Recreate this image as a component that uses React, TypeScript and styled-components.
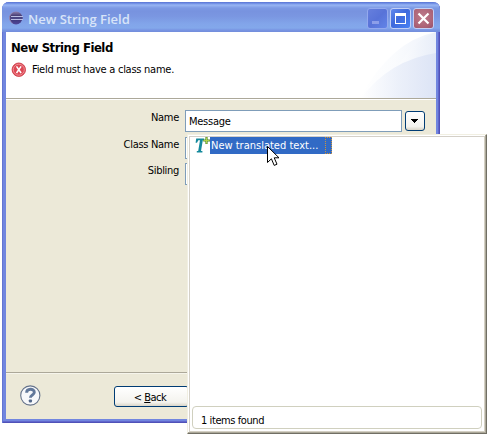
import React from 'react';
import styled, { createGlobalStyle } from 'styled-components';

const GlobalStyle = createGlobalStyle`
  * { box-sizing: border-box; }
  body { margin: 0; background: #fff; overflow: hidden; }
`;

const Desktop = styled.main`
  position: relative;
  width: 490px;
  height: 437px;
  padding: 2px;
  background: #fff;
  color: #000;
  font: 11px/14px 'DejaVu Sans Condensed', 'DejaVu Sans', sans-serif;
`;

const Text = styled.span<{ $spacing?: number }>`
  white-space: nowrap;
  letter-spacing: ${(p) => p.$spacing ?? -0.26}px;
`;

const Window = styled.section`
  display: flex;
  flex-direction: column;
  width: 438px;
  height: 421px;
  padding: 0 4px 4px;
  border-radius: 7px 7px 0 0;
  background: #7186df;
  box-shadow: inset 1px 0 #6375d2, inset -1px -1px #5052b8, inset -2px -2px #6167cc;
  overflow: hidden;
`;

const TitleBar = styled.header`
  display: flex;
  flex: 0 0 30px;
  align-items: center;
  margin: 0 -4px;
  padding: 2px 6px 0 7px;
  background: linear-gradient(#5873d4 0, #7b9aea 2px, #98b5f3 3px, #7c99e5 6px, #7893df 9px, #7a96e1 14px, #82a5ea 22px, #83a8eb 26px, #7895e3 28px, #728ddb 30px);
`;

const Title = styled.h1`
  flex: 1;
  margin: 0 0 0 3px;
  padding-top: 1px;
  color: #d8e4f8;
  font: 600 13px/18px 'Open Sans', 'Noto Sans', sans-serif;
  letter-spacing: 0;
`;

const WindowButton = styled.button<{ $kind: 'minimize' | 'maximize' | 'close' }>`
  width: 21px;
  height: 21px;
  margin-left: 2px;
  padding: 0;
  border: 1px solid ${(p) => (p.$kind === 'minimize' ? '#94a9ee' : '#c3cff5')};
  border-radius: 3px;
  background: ${(p) =>
    p.$kind === 'close'
      ? 'radial-gradient(circle at 45% 40%, #bd7a8b, #ad6477 65%, #96516b)'
      : p.$kind === 'maximize'
        ? 'linear-gradient(135deg, #6389ed, #3e69dc 45%, #4982f4)'
        : 'linear-gradient(135deg, #667fdd, #5873d8 50%, #6284e8)'};
  svg { display: block; }
`;

const Banner = styled.div`
  display: flex;
  flex: 0 0 68px;
  justify-content: space-between;
  background: #fff;
  border-bottom: 1px solid #fff;
  box-shadow: inset 0 -1px #aca899;
`;

const BannerCopy = styled.div`
  padding: 8px 0 0 5px;
`;

const Heading = styled.h2`
  margin: 0 0 7px;
  font-size: 13px;
  line-height: 15px;
  font-weight: bold;
  letter-spacing: -0.48px;
  white-space: nowrap;
`;

const Message = styled.div`
  display: flex;
  align-items: center;
  gap: 6px;
  height: 15px;
`;

const Form = styled.form`
  display: grid;
  flex: 1;
  grid-template-columns: 173px 217px 20px;
  grid-template-rows: 22px 22px 22px;
  row-gap: 4.5px;
  column-gap: 3px;
  align-content: start;
  padding: 10px 0 0;
  background: #ece9d8;
`;

const Label = styled.label`
  padding-top: 1px;
  text-align: right;
  white-space: nowrap;
  letter-spacing: -0.3px;
`;

const Field = styled.div`
  height: 22px;
  margin: 0 -3px 0 3px;
  padding: 4px 3px;
  border: 1px solid #7f9db9;
  background: #fff;
`;

const DropButton = styled.button`
  display: grid;
  place-items: center;
  width: 20px;
  height: 20px;
  margin: 1px 0 0 3px;
  padding: 0;
  border: 1px solid #003c74;
  border-radius: 3px;
  background: linear-gradient(#fff, #f4f3ee 80%, #d9d5c8);
`;

const Footer = styled.footer`
  display: flex;
  flex: 0 0 47px;
  align-items: flex-start;
  padding: 13px 0 0 14px;
  background: #ece9d8;
  border-top: 1px solid #aca899;
  box-shadow: inset 0 1px #f6f5ec;
  svg { margin-top: -1px; }
`;

const BackButton = styled.button`
  width: 75px;
  height: 21px;
  margin-left: 72px;
  padding: 2px 3px 0 0;
  border: 1px solid #003c74;
  border-radius: 3px;
  color: #000;
  background: linear-gradient(#fff, #f4f3ee 80%, #d9d5c8);
  font: inherit;
  line-height: 14px;
`;

const Popup = styled.aside`
  position: absolute;
  left: 187px;
  top: 134px;
  display: flex;
  flex-direction: column;
  width: 300px;
  height: 300px;
  padding: 3px 3px 4px;
  background: #fff;
  border: 1px solid;
  border-color: #f1efe2 #716f64 #716f64 #f1efe2;
  box-shadow: inset -1px -1px #aca899, inset 1px 1px #fff, inset -2px -2px #d4d0c4, inset 2px 2px #d4d0c8;
`;

const Proposal = styled.div`
  display: flex;
  height: 17px;
  margin: -1px 0 0 3px;
`;

const Selected = styled.div`
  position: relative;
  width: 122px;
  height: 17px;
  padding: 2px 1px;
  color: #fff;
  background: #316ac5;
`;

const FocusEdge = styled.i`
  position: absolute;
  right: 0;
  top: 0;
  width: 7px;
  height: 17px;
  border: 1px dotted #ce953a;
`;

const Status = styled.div`
  width: 290px;
  height: 23px;
  margin: auto 0 0 1px;
  padding: 7px 8px 0;
  border: 1px solid #d0d0bf;
  border-radius: 4px;
`;

const Cursor = styled.svg`
  position: absolute;
  left: 267px;
  top: 146px;
`;

const EclipseIcon = () => (
  <svg width="16" height="14" viewBox="0 0 16 14">
    <defs>
      <linearGradient id="orb" x2="0" y2="1"><stop stopColor="#8f80ae" /><stop offset=".4" stopColor="#352e68" /><stop offset="1" stopColor="#51479a" /></linearGradient>
    </defs>
    <circle cx="7" cy="7" r="6.5" fill="url(#orb)" />
    <path d="M2 5.5h12M2 8.5h12" stroke="#b9bde2" />
    <path d="M1 7h13" stroke="#595896" />
    <path d="M3.5 1.8A6 6 0 0 0 3.5 12.2" fill="none" stroke="#a58daf" strokeWidth=".8" />
  </svg>
);

const ErrorIcon = () => (
  <svg width="15" height="15" viewBox="0 0 15 15">
    <circle cx="7.8" cy="7.7" r="6.7" fill="#dc4855" stroke="#cf3a46" strokeWidth=".9" />
    <circle cx="7.8" cy="7.7" r="5.5" fill="none" stroke="#f0969b" strokeWidth=".9" />
    <path d="m5.5 4.4 4.6 6.6m0-6.6-4.6 6.6" stroke="#fff" strokeWidth="1.5" />
  </svg>
);

const Swoosh = () => (
  <svg width="80" height="66" viewBox="0 0 80 66">
    <defs>
      <linearGradient id="veil"><stop stopColor="#fff" /><stop offset=".45" stopColor="#f8fafd" /><stop offset="1" stopColor="#e6ecf8" /></linearGradient>
      <linearGradient id="fold"><stop stopColor="#fff" /><stop offset=".5" stopColor="#e9eef9" /><stop offset="1" stopColor="#dae2f5" /></linearGradient>
    </defs>
    <path d="M4 66Q35 9 80 0V66Z" fill="url(#veil)" opacity=".7" />
    <path d="M27 66Q47 11 80 0V66Z" fill="url(#veil)" opacity=".8" />
    <path d="M5 66Q34 28 80 21V66Z" fill="url(#fold)" opacity=".85" />
  </svg>
);

const HelpIcon = () => (
  <svg width="22" height="22" viewBox="0 0 22 22">
    <circle cx="10.3" cy="10.5" r="9.6" fill="#f7f8fa" stroke="#65738b" strokeWidth="1.1" />
    <path d="M6.6 7.8C6.7 3.2 14.3 3.2 14.3 7.2c0 3-3.9 2.5-3.9 5.6" fill="none" stroke="#62789a" strokeWidth="2.9" />
    <rect x="8.8" y="14.4" width="3.2" height="3" rx=".8" fill="#53698a" />
  </svg>
);

const TextIcon = () => (
  <svg width="16" height="17" viewBox="0 0 16 17">
    <path d="M2.2 1.6h8L9.9 3.2H8.8L7 14h1.4v1.4H2.8V14h1.4L6 3.2H4.3L3 5.8H1.6Z" fill="#14899c" />
    <path d="M12.5 0v7M9.2 3.5H16" stroke="#518a25" strokeWidth="2.2" />
    <path d="M12.5.5v6M9.7 3.5h5.8" stroke="#b6d74c" strokeWidth=".9" />
  </svg>
);

export default function App() {
  return (
    <>
      <GlobalStyle />
      <Desktop>
        <Window>
          <TitleBar>
            <EclipseIcon />
            <Title>New String Field</Title>
            <WindowButton $kind="minimize" aria-label="Minimize"><svg width="19" height="19"><path d="M4 12h7v3H4z" fill="#8c9ee9" /></svg></WindowButton>
            <WindowButton $kind="maximize" aria-label="Maximize"><svg width="19" height="19"><path d="M4 4h11v11H4zM5 7v7h9V7z" fill="#fff" fillRule="evenodd" /></svg></WindowButton>
            <WindowButton $kind="close" aria-label="Close"><svg width="19" height="19"><path d="m4.5 4.5 10 10m0-10-10 10" stroke="#fff" strokeWidth="2.2" /></svg></WindowButton>
          </TitleBar>
          <Banner>
            <BannerCopy>
              <Heading>New String Field</Heading>
              <Message><ErrorIcon /><Text>Field must have a class name.</Text></Message>
            </BannerCopy>
            <Swoosh />
          </Banner>
          <Form>
            <Label>Name</Label><Field><Text>Message</Text></Field>
            <DropButton type="button" aria-label="Choose message"><svg width="8" height="5"><path d="M0 0h7v1H6v1H5v1H4v1H3V3H2V2H1V1H0z" /></svg></DropButton>
            <Label>Class Name</Label><Field /><span />
            <Label>Sibling</Label><Field />
          </Form>
          <Footer><HelpIcon /><BackButton><Text $spacing={-0.5}>&lt; <u>B</u>ack</Text></BackButton></Footer>
        </Window>
        <Popup>
          <Proposal><TextIcon /><Selected><Text $spacing={0}>New translated text...</Text><FocusEdge /></Selected></Proposal>
          <Status><Text $spacing={-0.42}>1 items found</Text></Status>
        </Popup>
        <Cursor width="13" height="21" viewBox="0 0 13 21">
          <path d="M.5.5v16L4.4 12.8 7.2 19.4 10 18.2 7.2 11.8H12Z" fill="#fff" stroke="#000" />
        </Cursor>
      </Desktop>
    </>
  );
}
